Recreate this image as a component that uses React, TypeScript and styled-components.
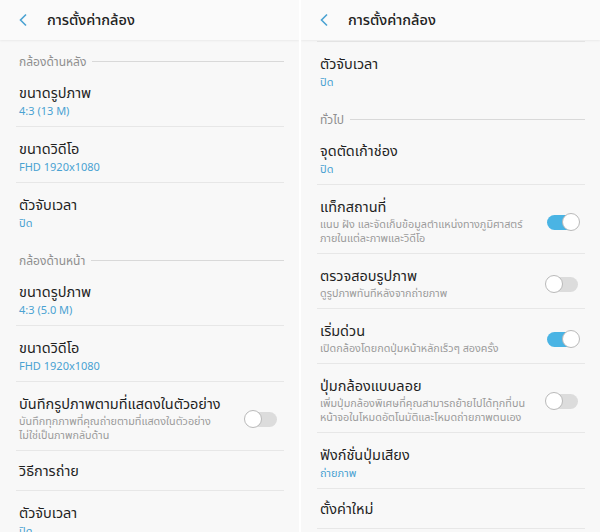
import React from "react";
import styled, { createGlobalStyle } from "styled-components";

const Global = createGlobalStyle`
  html, body { margin: 0; padding: 0; background: #ffffff; }
  body { font-family: "Noto Sans Thai", "Roboto", "Noto Sans", sans-serif; }
`;

const Page = styled.div`
  width: 600px;
  height: 532px;
  display: flex;
  gap: 2px;
  background: #ffffff;
  overflow: hidden;
`;

const Panel = styled.div`
  width: 299px;
  height: 532px;
  background: #f8f8f8;
  display: flex;
  flex-direction: column;
  overflow: hidden;
`;

const Header = styled.div`
  height: 40px;
  flex: none;
  display: flex;
  align-items: center;
  background: #fafafa;
  box-shadow: 0 1px 2px rgba(0, 0, 0, 0.06);
  position: relative;
  z-index: 1;
`;

const Back = styled.div`
  width: 47px;
  display: flex;
  justify-content: flex-start;
  padding-left: 18px;
  box-sizing: border-box;
`;

const Title = styled.div`
  font-size: 14.5px;
  font-weight: 500;
  color: #222222;
  padding-top: 1px;
`;

const List = styled.div`
  display: flex;
  flex-direction: column;
  padding: 0 15px 0 16px;
`;

const TopRule = styled.div`
  height: 1px;
  background: #e7e7e7;
  margin-top: 1px;
`;

const Section = styled.div`
  height: 31px;
  box-sizing: border-box;
  padding: 14px 0 0 3px;
  display: flex;
  align-items: flex-start;
  gap: 6px;
`;

const SectionLabel = styled.span`
  font-size: 12px;
  line-height: 16px;
  color: #8f8f8f;
`;

const SectionLine = styled.span`
  flex: 1;
  height: 1px;
  margin-top: 7px;
  background: #d9d9d9;
`;

const Item = styled.div<{ $last?: boolean; $top: number; $bottom: number }>`
  display: flex;
  align-items: center;
  padding: ${(p) => p.$top}px 0 ${(p) => p.$bottom}px 3px;
  border-bottom: ${(p) => (p.$last ? "1px solid transparent" : "1px solid #e7e7e7")};
  gap: 10px;
`;

const Texts = styled.div`
  flex: 1;
  display: flex;
  flex-direction: column;
  min-width: 0;
`;

const ItemTitle = styled.div`
  font-size: 14.5px;
  line-height: 18px;
  color: #1f1f1f;
`;

const Value = styled.div`
  font-size: 11px;
  line-height: 14px;
  color: #4aa2d2;
  margin-top: 2px;
`;

const Desc = styled.div`
  font-size: 10.8px;
  line-height: 14px;
  color: #9b9b9b;
  margin-top: 1px;
`;

const Track = styled.div<{ $on: boolean }>`
  flex: none;
  width: 31px;
  height: 15px;
  border-radius: 8px;
  background: ${(p) => (p.$on ? "#4ab4e4" : "#dcdcdc")};
  position: relative;
  margin-right: 7px;
`;

const Thumb = styled.div<{ $on: boolean }>`
  position: absolute;
  top: -2.5px;
  ${(p) => (p.$on ? "right: -2px;" : "left: -2px;")}
  width: 18px;
  height: 18px;
  box-sizing: border-box;
  border-radius: 50%;
  background: #ffffff;
  border: 1px solid #b9b9b9;
`;

const Toggle = ({ on }: { on: boolean }) => (
  <Track $on={on}>
    <Thumb $on={on} />
  </Track>
);

const Chevron = () => (
  <svg width="10" height="14" viewBox="0 0 10 14">
    <path d="M8 1.5 L2.5 7 L8 12.5" fill="none" stroke="#4aa2d2" strokeWidth="1.6" />
  </svg>
);

type Row = {
  kind: "section" | "item";
  title: string;
  value?: string;
  desc?: string[];
  toggle?: boolean;
  last?: boolean;
};

const leftRows: Row[] = [
  { kind: "section", title: "กล้องด้านหลัง" },
  { kind: "item", title: "ขนาดรูปภาพ", value: "4:3 (13 M)" },
  { kind: "item", title: "ขนาดวิดีโอ", value: "FHD 1920x1080" },
  { kind: "item", title: "ตัวจับเวลา", value: "ปิด", last: true },
  { kind: "section", title: "กล้องด้านหน้า" },
  { kind: "item", title: "ขนาดรูปภาพ", value: "4:3 (5.0 M)" },
  { kind: "item", title: "ขนาดวิดีโอ", value: "FHD 1920x1080" },
  {
    kind: "item",
    title: "บันทึกรูปภาพตามที่แสดงในตัวอย่าง",
    desc: ["บันทึกทุกภาพที่คุณถ่ายตามที่แสดงในตัวอย่าง", "ไม่ใช่เป็นภาพกลับด้าน"],
    toggle: false,
  },
  { kind: "item", title: "วิธีการถ่าย" },
  { kind: "item", title: "ตัวจับเวลา", value: "ปิด" },
];

const rightRows: Row[] = [
  { kind: "item", title: "ตัวจับเวลา", value: "ปิด", last: true },
  { kind: "section", title: "ทั่วไป" },
  { kind: "item", title: "จุดตัดเก้าช่อง", value: "ปิด" },
  {
    kind: "item",
    title: "แท็กสถานที่",
    desc: ["แนบ ฝัง และจัดเก็บข้อมูลตำแหน่งทางภูมิศาสตร์", "ภายในแต่ละภาพและวิดีโอ"],
    toggle: true,
  },
  { kind: "item", title: "ตรวจสอบรูปภาพ", desc: ["ดูรูปภาพทันทีหลังจากถ่ายภาพ"], toggle: false },
  { kind: "item", title: "เริ่มด่วน", desc: ["เปิดกล้องโดยกดปุ่มหน้าหลักเร็วๆ สองครั้ง"], toggle: true },
  {
    kind: "item",
    title: "ปุ่มกล้องแบบลอย",
    desc: ["เพิ่มปุ่มกล้องพิเศษที่คุณสามารถย้ายไปได้ทุกที่บน", "หน้าจอในโหมดอัตโนมัติและโหมดถ่ายภาพตนเอง"],
    toggle: false,
  },
  { kind: "item", title: "ฟังก์ชั่นปุ่มเสียง", value: "ถ่ายภาพ" },
  { kind: "item", title: "ตั้งค่าใหม่" },
];

const padFor = (r: Row): [number, number] => {
  if (r.desc) return [14, 7];
  if (r.value) return [14, 7];
  return [12, 9];
};

const Rows = ({ rows }: { rows: Row[] }) => (
  <>
    {rows.map((r, i) => {
      if (r.kind === "section") {
        return (
          <Section key={i}>
            <SectionLabel>{r.title}</SectionLabel>
            <SectionLine />
          </Section>
        );
      }
      const [top, bottom] = padFor(r);
      return (
        <Item key={i} $last={r.last} $top={top} $bottom={bottom}>
          <Texts>
            <ItemTitle>{r.title}</ItemTitle>
            {r.value && <Value>{r.value}</Value>}
            {r.desc && <Desc>{r.desc.map((d, j) => (<div key={j}>{d}</div>))}</Desc>}
          </Texts>
          {r.toggle !== undefined && <Toggle on={r.toggle} />}
        </Item>
      );
    })}
  </>
);

const Screen = ({ rows, topRule }: { rows: Row[]; topRule?: boolean }) => (
  <Panel>
    <Header>
      <Back>
        <Chevron />
      </Back>
      <Title>การตั้งค่ากล้อง</Title>
    </Header>
    <List>
      {topRule && <TopRule />}
      <Rows rows={rows} />
    </List>
  </Panel>
);

export default function App() {
  return (
    <Page>
      <Global />
      <Screen rows={leftRows} />
      <Screen rows={rightRows} topRule />
    </Page>
  );
}
